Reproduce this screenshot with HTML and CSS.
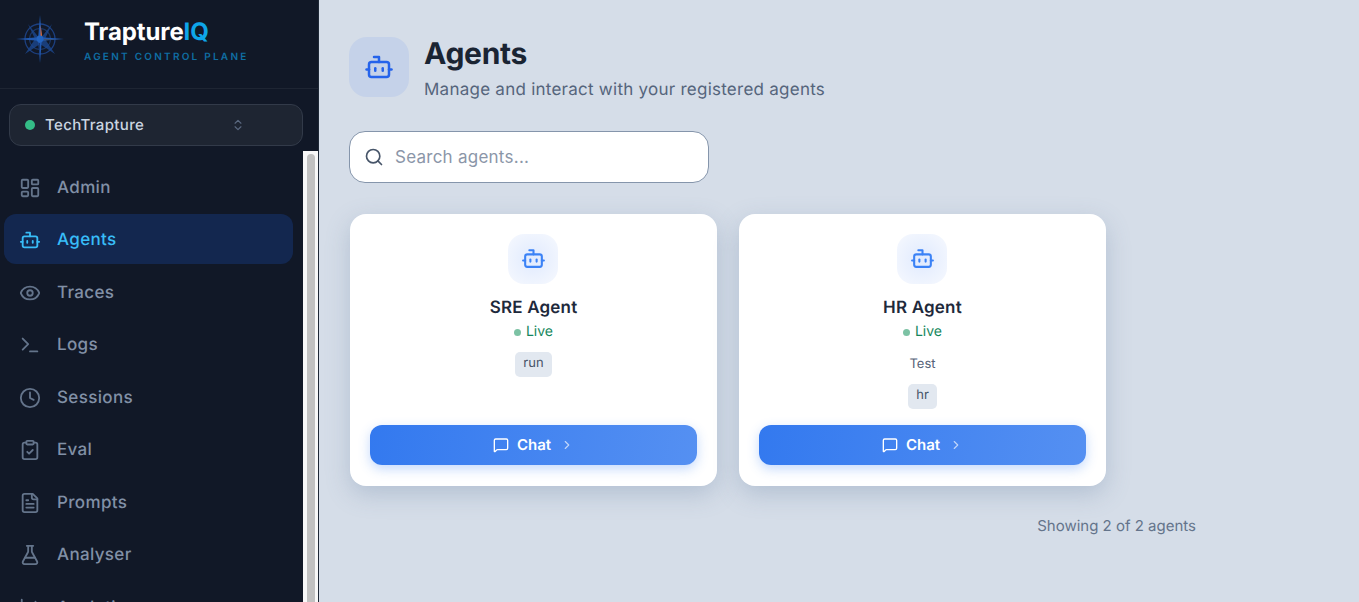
FILE: index.html
```html
<!DOCTYPE html>
<html lang="en">
<head>
<meta charset="utf-8">
<title>Agents - TraptureIQ</title>
<link rel="stylesheet" href="styles.css">
</head>
<body>
<svg class="defs" width="0" height="0" aria-hidden="true">
  <symbol id="bot" viewBox="0 0 24 24" fill="none" stroke="currentColor" stroke-width="2" stroke-linecap="round" stroke-linejoin="round">
    <path d="M12 8V4H8"/><rect x="4" y="8" width="16" height="12" rx="2"/><path d="M2 14h2"/><path d="M20 14h2"/><path d="M15 13v2"/><path d="M9 13v2"/>
  </symbol>
</svg>
<div class="app">
  <aside class="sidebar">
    <header class="brand">
      <svg class="logo" viewBox="0 0 50 50" aria-hidden="true">
        <circle cx="25" cy="25" r="15" fill="none" stroke="#1d4080" stroke-width="1.3"/>
        <circle cx="25" cy="25" r="10.5" fill="none" stroke="#1b3768" stroke-width="1.1"/>
        <path d="M25 25 L37 10 L30 25 L40 40 L25 30 L10 40 L20 25 L13 10Z" fill="#1c478f" opacity=".8"/>
        <path d="M25 1 L26.8 23.2 L49 25 L26.8 26.8 L25 49 L23.2 26.8 L1 25 L23.2 23.2Z" fill="#2159b0"/>
        <path d="M25.5 11 L27.2 22 L25.5 22Z" fill="#d9652f"/>
        <path d="M29 25 H44 L29 26.6Z" fill="#3c5273"/>
        <path d="M25 29 V44 L23.6 29Z" fill="#1a3a75"/>
        <circle cx="25" cy="25" r="3.4" fill="#2364c0"/>
      </svg>
      <div class="brand-text">
        <div class="brand-name">Trapture<span class="brand-iq">IQ</span></div>
        <div class="brand-sub">AGENT CONTROL PLANE</div>
      </div>
    </header>
    <div class="org">
      <span class="org-dot"></span>
      <span class="org-name">TechTrapture</span>
      <svg class="org-chev" viewBox="0 0 24 24" fill="none" stroke="currentColor" stroke-width="2" stroke-linecap="round" stroke-linejoin="round"><path d="m7 15 5 5 5-5"/><path d="m7 9 5-5 5 5"/></svg>
    </div>
    <div class="nav-wrap">
      <nav class="nav">
        <a class="nav-item"><svg class="nav-icon" viewBox="0 0 24 24"><rect x="3" y="3" width="7" height="9" rx="1"/><rect x="14" y="3" width="7" height="5" rx="1"/><rect x="14" y="12" width="7" height="9" rx="1"/><rect x="3" y="16" width="7" height="5" rx="1"/></svg>Admin</a>
        <a class="nav-item active"><svg class="nav-icon"><use href="#bot"/></svg>Agents</a>
        <a class="nav-item"><svg class="nav-icon" viewBox="0 0 24 24"><path d="M2.06 12.35a1 1 0 0 1 0-.7 10.75 10.75 0 0 1 19.88 0 1 1 0 0 1 0 .7 10.75 10.75 0 0 1-19.88 0"/><circle cx="12" cy="12" r="3"/></svg>Traces</a>
        <a class="nav-item"><svg class="nav-icon" viewBox="0 0 24 24"><path d="m4 17 6-6-6-6"/><path d="M12 19h8"/></svg>Logs</a>
        <a class="nav-item"><svg class="nav-icon" viewBox="0 0 24 24"><circle cx="12" cy="12" r="10"/><path d="M12 6v6l4 2"/></svg>Sessions</a>
        <a class="nav-item"><svg class="nav-icon" viewBox="0 0 24 24"><rect x="8" y="2" width="8" height="4" rx="1"/><path d="M16 4h2a2 2 0 0 1 2 2v14a2 2 0 0 1-2 2H6a2 2 0 0 1-2-2V6a2 2 0 0 1 2-2h2"/><path d="m9 14 2 2 4-4"/></svg>Eval</a>
        <a class="nav-item"><svg class="nav-icon" viewBox="0 0 24 24"><path d="M15 2H6a2 2 0 0 0-2 2v16a2 2 0 0 0 2 2h12a2 2 0 0 0 2-2V7Z"/><path d="M14 2v4a2 2 0 0 0 2 2h4"/><path d="M10 9H8"/><path d="M16 13H8"/><path d="M16 17H8"/></svg>Prompts</a>
        <a class="nav-item"><svg class="nav-icon" viewBox="0 0 24 24"><path d="M14 2v6a2 2 0 0 0 .245.96l5.51 10.08A2 2 0 0 1 18 22H6a2 2 0 0 1-1.755-2.96l5.51-10.08A2 2 0 0 0 10 8V2"/><path d="M6.453 15h11.094"/><path d="M8.5 2h7"/></svg>Analyser</a>
        <a class="nav-item"><svg class="nav-icon" viewBox="0 0 24 24"><path d="M3 3v16a2 2 0 0 0 2 2h16"/><path d="M13 17V9"/><path d="M18 17V5"/><path d="M8 17v-3"/></svg>Analytics</a>
      </nav>
      <div class="scrollbar"><div class="scroll-thumb"></div></div>
    </div>
  </aside>
  <main class="main">
    <header class="page-head">
      <div class="page-icon"><svg class="page-bot"><use href="#bot"/></svg></div>
      <div>
        <h1 class="page-title">Agents</h1>
        <p class="page-sub">Manage and interact with your registered agents</p>
      </div>
    </header>
    <label class="search">
      <svg class="search-icon" viewBox="0 0 24 24" fill="none" stroke="currentColor" stroke-width="2" stroke-linecap="round" stroke-linejoin="round"><path d="m21 21-4.34-4.34"/><circle cx="11" cy="11" r="8"/></svg>
      <input class="search-input" type="text" placeholder="Search agents...">
    </label>
    <section class="cards">
      <article class="card">
        <div class="card-icon"><svg class="card-bot"><use href="#bot"/></svg></div>
        <h2 class="card-name">SRE Agent</h2>
        <div class="live"><span class="live-dot"></span>Live</div>
        <div class="tags"><span class="tag">run</span></div>
        <button class="chat" type="button">
          <svg class="chat-icon" viewBox="0 0 24 24" fill="none" stroke="currentColor" stroke-width="2" stroke-linecap="round" stroke-linejoin="round"><path d="M22 17a2 2 0 0 1-2 2H6.828a2 2 0 0 0-1.414.586l-2.202 2.202A.71.71 0 0 1 2 21.286V5a2 2 0 0 1 2-2h16a2 2 0 0 1 2 2z"/></svg>
          <span class="chat-label">Chat</span>
          <svg class="chat-chev" viewBox="0 0 24 24" fill="none" stroke="currentColor" stroke-width="2" stroke-linecap="round" stroke-linejoin="round"><path d="m9 18 6-6-6-6"/></svg>
        </button>
      </article>
      <article class="card">
        <div class="card-icon"><svg class="card-bot"><use href="#bot"/></svg></div>
        <h2 class="card-name">HR Agent</h2>
        <div class="live"><span class="live-dot"></span>Live</div>
        <p class="card-desc">Test</p>
        <div class="tags"><span class="tag">hr</span></div>
        <button class="chat" type="button">
          <svg class="chat-icon" viewBox="0 0 24 24" fill="none" stroke="currentColor" stroke-width="2" stroke-linecap="round" stroke-linejoin="round"><path d="M22 17a2 2 0 0 1-2 2H6.828a2 2 0 0 0-1.414.586l-2.202 2.202A.71.71 0 0 1 2 21.286V5a2 2 0 0 1 2-2h16a2 2 0 0 1 2 2z"/></svg>
          <span class="chat-label">Chat</span>
          <svg class="chat-chev" viewBox="0 0 24 24" fill="none" stroke="currentColor" stroke-width="2" stroke-linecap="round" stroke-linejoin="round"><path d="m9 18 6-6-6-6"/></svg>
        </button>
      </article>
    </section>
    <p class="count">Showing 2 of 2 agents</p>
  </main>
</div>
</body>
</html>
```
FILE: styles.css
```css
* { box-sizing: border-box; }
html, body { margin: 0; height: 100%; overflow: hidden; }
body { font-family: Inter, "Liberation Sans", sans-serif; background: #d5dde8; color: #1e293b; text-rendering: geometricPrecision; }
.defs { position: absolute; }
.app { display: flex; height: 602px; overflow: hidden; }

.sidebar { width: 319px; flex: none; display: flex; flex-direction: column; background: #111827; border-right: 1px solid #1f2937; }
.brand { height: 89px; flex: none; display: flex; align-items: flex-start; padding: 14px 0 0 15px; gap: 19px; border-bottom: 1px solid #1e2533; }
.logo { width: 50px; height: 50px; flex: none; }
.brand-text { padding-top: 3px; }
.brand-name { font-size: 24px; font-weight: 700; line-height: 29px; color: #fff; letter-spacing: -0.1px; }
.brand-iq { color: #0ea5e9; }
.brand-sub { margin-top: 5px; font-size: 10px; line-height: 13px; font-weight: 600; letter-spacing: 2.25px; color: #0f6ea3; }

.org { flex: none; margin: 15px 15px 5px 9px; height: 42px; display: flex; align-items: center; padding: 0 15px; background: #1e2532; border: 1px solid #323a49; border-radius: 12px; }
.org-dot { width: 10px; height: 10px; border-radius: 50%; background: #34bd87; margin-right: 10px; }
.org-name { flex: 1; padding-bottom: 2px; font-size: 15px; font-weight: 500; letter-spacing: .35px; color: #cbd5e1; }
.org-chev { width: 14px; height: 14px; color: #5b6980; margin-right: 42px; }

.nav-wrap { flex: 1; min-height: 0; display: flex; }
.nav { flex: 1; min-width: 0; overflow: hidden; padding: 10.9px 10px 0 4px; display: flex; flex-direction: column; gap: 2.5px; }
.nav-item { flex: none; height: 50px; display: flex; align-items: center; gap: 16px; padding: 1.5px 0 0 15px; border-radius: 12px; font-size: 17px; font-weight: 500; letter-spacing: .35px; color: #8190a6; }
.nav-item.active { background: #13274f; color: #38bdf8; }
.nav-icon { width: 22px; height: 22px; flex: none; fill: none; stroke: #64748b; stroke-width: 2; stroke-linecap: round; stroke-linejoin: round; }
.nav-item.active .nav-icon { color: #38bdf8; stroke: none; }
.scrollbar { width: 15px; flex: none; background: #f8f8f8; padding: 3px 3px 0 4px; }
.scroll-thumb { height: 100%; background: #c1c1c1; border-radius: 4px 4px 0 0; }

.main { flex: 1; min-width: 0; padding: 37px 30px 0; }
.page-head { display: flex; align-items: flex-start; gap: 15px; }
.page-icon { width: 60px; height: 60px; flex: none; display: flex; align-items: center; justify-content: center; background: #c5d2e9; border-radius: 18px; color: #2563eb; }
.page-bot { width: 30px; height: 30px; }
.page-title { margin: 0; font-size: 30px; line-height: 34px; font-weight: 700; color: #1a2433; letter-spacing: -0.3px; }
.page-sub { margin: 8px 0 0; font-size: 17px; line-height: 22px; letter-spacing: .25px; color: #55657c; }

.search { margin-top: 30px; width: 360px; height: 52px; display: flex; align-items: center; gap: 9px; padding: 0 14px; background: #fff; border: 1px solid #8595ab; border-radius: 16px; }
.search-icon { width: 20px; height: 20px; flex: none; color: #475569; }
.search-input { flex: 1; min-width: 0; border: 0; outline: 0; background: transparent; font: 400 17px Inter, "Liberation Sans", sans-serif; letter-spacing: .25px; color: #1e293b; }
.search-input::placeholder { color: #8b96a8; opacity: 1; }

.cards { margin-top: 31px; display: flex; gap: 22px; padding-left: 1px; }
.card { width: 367px; height: 272px; display: flex; flex-direction: column; align-items: center; padding: 20px 20px 21px; background: #fff; border-radius: 16px; box-shadow: 0 8px 24px rgba(100, 125, 160, .3); }
.card-icon { width: 50px; height: 50px; margin-right: 1px; display: flex; align-items: center; justify-content: center; border-radius: 16px; background: radial-gradient(circle, #e0eafe 0%, #f2f6fe 80%); color: #3b82f6; }
.card-bot { width: 25px; height: 25px; margin-bottom: 2px; }
.card-name { margin: 12px 0 0; font-size: 17px; line-height: 24px; font-weight: 600; letter-spacing: .2px; color: #1e293b; }
.live { margin-top: 2px; display: flex; align-items: center; gap: 5px; font-size: 14px; line-height: 20px; font-weight: 400; color: #15865c; }
.live-dot { width: 7px; height: 7px; border-radius: 50%; background: #7cc2a4; }
.card-desc { margin: 12px 0 0; font-size: 13px; line-height: 20px; color: #566378; }
.tags { margin-top: 10px; display: flex; gap: 6px; }
.tag { padding: 0 8.5px; height: 25px; line-height: 23px; font-size: 13px; background: #e2e8f0; border-radius: 5px; color: #475569; }
.chat { margin-top: auto; width: 100%; height: 40px; flex: none; display: flex; align-items: center; justify-content: center; gap: 8px; border: 0; border-radius: 12px; background: linear-gradient(100deg, #3379ef, #5590f2); box-shadow: 0 4px 12px rgba(59, 130, 246, .3); color: #fff; font: 600 15px Inter, "Liberation Sans", sans-serif; text-rendering: geometricPrecision; }
.chat-label { padding-bottom: 2px; }
.chat-icon { width: 16px; height: 16px; }
.chat-chev { width: 14px; height: 14px; margin-left: 1px; opacity: .65; }

.count { width: 847px; margin: 30px 0 0; text-align: right; font-size: 15px; line-height: 20px; color: #64748b; }
```
